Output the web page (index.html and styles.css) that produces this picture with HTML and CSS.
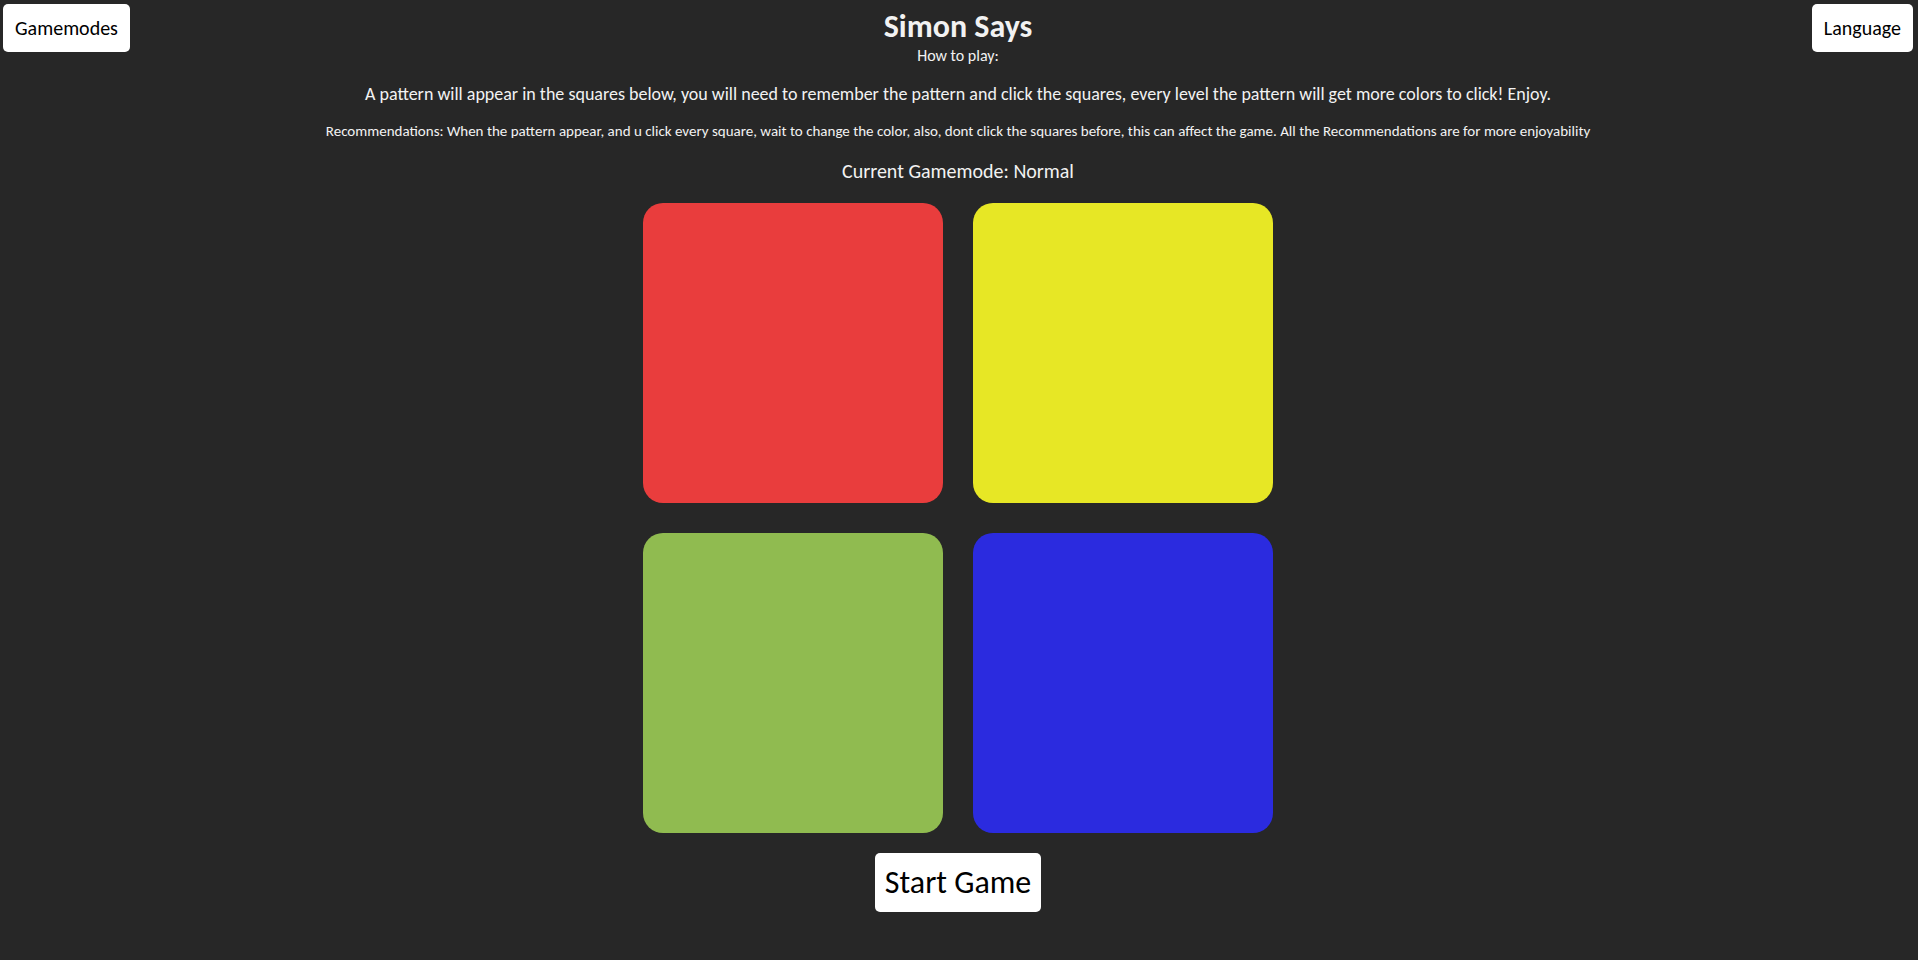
FILE: index.html
```html
<!DOCTYPE html>
<html lang="en">
<head>
<meta charset="utf-8">
<title>Simon Says</title>
<link rel="stylesheet" href="styles.css">
</head>
<body>
<header class="top">
  <button class="btn" type="button">Gamemodes</button>
  <div class="intro">
    <h1 class="title">Simon Says</h1>
    <p class="howto">How to play:</p>
    <p class="rules">A pattern will appear in the squares below, you will need to remember the pattern and click the squares, every level the pattern will get more colors to click! Enjoy.</p>
    <p class="tips">Recommendations: When the pattern appear, and u click every square, wait to change the color, also, dont click the squares before, this can affect the game. All the Recommendations are for more enjoyability</p>
    <p class="mode">Current Gamemode: Normal</p>
  </div>
  <button class="btn btn-right" type="button">Language</button>
</header>
<main class="game">
  <div class="board">
    <button class="square red" type="button" aria-label="Red"></button>
    <button class="square yellow" type="button" aria-label="Yellow"></button>
    <button class="square green" type="button" aria-label="Green"></button>
    <button class="square blue" type="button" aria-label="Blue"></button>
  </div>
  <button class="btn start" type="button">Start Game</button>
</main>
</body>
</html>
```
FILE: styles.css
```css
body {
  margin: 0;
  padding: 4px 5px 4px 3px;
  background: #272727;
  color: #f2f2f2;
  font-family: Calibri, Carlito, Lato, sans-serif;
}

.top {
  display: grid;
  grid-template-columns: 1fr auto 1fr;
  align-items: start;
}

.btn {
  justify-self: start;
  padding: 12px;
  border: 0;
  border-radius: 5px;
  background: #fff;
  color: #000;
  font-family: inherit;
  font-size: 20px;
  line-height: 24px;
}

.btn-right {
  justify-self: end;
}

.intro {
  padding-top: 4px;
  text-align: center;
}

.title,
.howto,
.rules,
.tips,
.mode {
  margin: 0;
}

.title {
  font-size: 32px;
  line-height: 38px;
}

.howto {
  font-size: 16px;
  line-height: 20px;
}

.rules {
  margin-top: 16px;
  font-size: 18px;
  line-height: 24px;
}

.tips {
  margin-top: 15px;
  font-size: 15px;
  line-height: 20px;
}

.mode {
  margin-top: 18px;
  font-size: 20px;
  line-height: 24px;
}

.game {
  display: flex;
  flex-direction: column;
  align-items: center;
  gap: 20px;
  margin-top: 20px;
}

.board {
  display: grid;
  grid-template-columns: 300px 300px;
  gap: 30px;
}

.square {
  aspect-ratio: 1;
  padding: 0;
  border: 0;
  border-radius: 20px;
}

.red { background: #e93d3d; }
.yellow { background: #e7e725; }
.green { background: #90bb50; }
.blue { background: #2b2bdf; }

.start {
  align-self: center;
  padding: 10px;
  font-size: 32px;
  line-height: 39px;
}
```
